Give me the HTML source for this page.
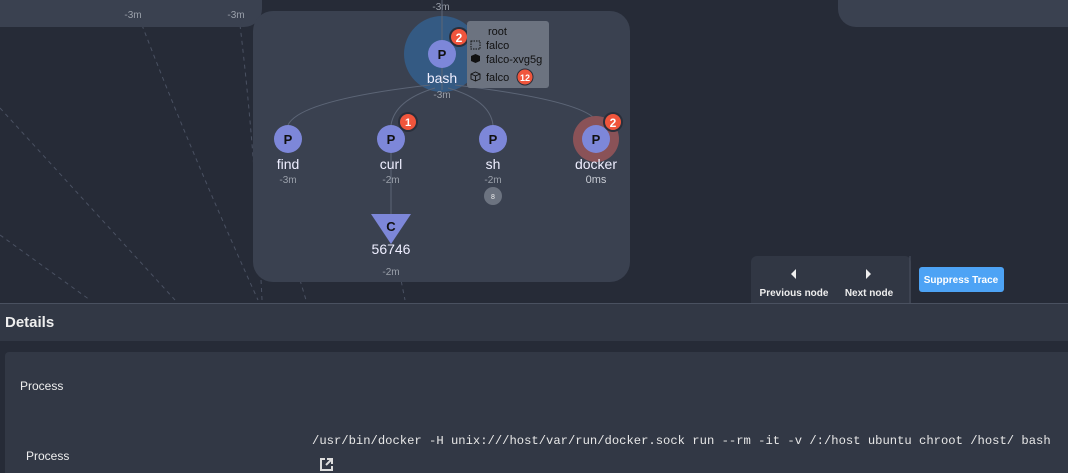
<!DOCTYPE html>
<html style="width:1068px;height:473px;overflow:hidden"><head><style>
body{margin:0;width:1068px;height:473px;overflow:hidden;background:#262b37;font-family:"Liberation Sans",sans-serif;position:relative}
.abs{position:absolute}
</style></head><body>
<svg class="abs" style="left:0;top:0" width="1068" height="303">
<g stroke="#4a5162" stroke-width="1" stroke-dasharray="4,4" fill="none">
<path d="M0 108 L175 300"/><path d="M0 235 L90 300"/><path d="M142 25 Q190 150 258 300"/><path d="M240 25 Q255 150 262 300"/>
<path d="M395 250 L405 300"/><path d="M300 280 L306 300"/>
</g>
<rect x="-20" y="-20" width="282" height="47" rx="18" fill="#3a4150"/>
<rect x="838" y="-20" width="250" height="47" rx="18" fill="#3a4150"/>
<rect x="253" y="11" width="377" height="271" rx="20" fill="#3a4150"/>
<text x="133" y="18" fill="#9aa0aa" font-size="10" text-anchor="middle">-3m</text>
<text x="236" y="18" fill="#9aa0aa" font-size="10" text-anchor="middle">-3m</text>
<text x="441" y="10" fill="#9aa0aa" font-size="10" text-anchor="middle">-3m</text>
<circle cx="442" cy="54" r="38" fill="#345a83"/>
<g stroke="#5c6576" fill="none" stroke-width="1">
<path d="M442 0 V90"/>
<path d="M430 85 Q300 100 288 125"/><path d="M435 88 Q395 100 391 125"/><path d="M448 88 Q490 100 493 125"/><path d="M455 85 Q580 100 596 120"/>
<path d="M391 153 V214"/>
</g>
<circle cx="442" cy="54" r="14" fill="#7d87d9"/>
<text x="442" y="59" font-size="13" font-weight="bold" text-anchor="middle" fill="#111">P</text>
<text x="442" y="83" font-size="14" text-anchor="middle" fill="#eef">bash</text>
<text x="442" y="98" font-size="10" text-anchor="middle" fill="#9aa0aa">-3m</text>
<circle cx="459" cy="37" r="10" fill="#2a2f3b"/><circle cx="459" cy="37" r="8" fill="#f0553c"/>
<text x="459" y="42" font-size="12" font-weight="bold" text-anchor="middle" fill="#fff">2</text>
<rect x="467" y="21" width="82" height="67" rx="3" fill="#6c7380"/>
<text x="488" y="35" font-size="11" fill="#111">root</text>
<rect x="471" y="41" width="9" height="8" fill="none" stroke="#111" stroke-dasharray="1.5,1"/>
<text x="486" y="49" font-size="11" fill="#111">falco</text>
<path d="M471 56 L475.5 54 L480 56 V61 L475.5 63 L471 61Z" fill="#111"/>
<text x="486" y="63" font-size="11" fill="#111">falco-xvg5g</text>
<path d="M471 74 L475.5 72 L480 74 V79 L475.5 81 L471 79Z M471 74 L475.5 76 L480 74 M475.5 76 V81" fill="none" stroke="#111" stroke-width="0.9"/>
<text x="486" y="81" font-size="11" fill="#111">falco</text>
<circle cx="525" cy="77" r="8" fill="#f0553c" stroke="#2a2f3b"/>
<text x="525" y="81" font-size="9" font-weight="bold" text-anchor="middle" fill="#fff">12</text>
<circle cx="596" cy="139" r="23" fill="#8a5257"/>
<g font-size="13" font-weight="bold" text-anchor="middle" fill="#111">
<circle cx="288" cy="139" r="14" fill="#7d87d9"/><text x="288" y="144">P</text>
<circle cx="391" cy="139" r="14" fill="#7d87d9"/><text x="391" y="144">P</text>
<circle cx="493" cy="139" r="14" fill="#7d87d9"/><text x="493" y="144">P</text>
<circle cx="596" cy="139" r="14" fill="#7d87d9"/><text x="596" y="144">P</text>
</g>
<g font-size="14" text-anchor="middle" fill="#eef">
<text x="288" y="169">find</text><text x="391" y="169">curl</text><text x="493" y="169">sh</text><text x="596" y="169">docker</text>
</g>
<g font-size="10" text-anchor="middle" fill="#9aa0aa">
<text x="288" y="183">-3m</text><text x="391" y="183">-2m</text><text x="493" y="183">-2m</text><text x="596" y="183" font-size="11" fill="#c8ccd4">0ms</text>
</g>
<circle cx="408" cy="122" r="10" fill="#2a2f3b"/><circle cx="408" cy="122" r="8" fill="#f0553c"/>
<text x="408" y="126" font-size="11" font-weight="bold" text-anchor="middle" fill="#fff">1</text>
<circle cx="613" cy="122" r="10" fill="#2a2f3b"/><circle cx="613" cy="122" r="8" fill="#f0553c"/>
<text x="613" y="127" font-size="12" font-weight="bold" text-anchor="middle" fill="#fff">2</text>
<circle cx="493" cy="196" r="9" fill="#6c7380"/>
<text x="493" y="199" font-size="7" text-anchor="middle" fill="#eee">8</text>
<path d="M371 214 H411 L391 244Z" fill="#7d87d9"/>
<text x="391" y="231" font-size="13" font-weight="bold" text-anchor="middle" fill="#111">C</text>
<text x="391" y="254" font-size="14" text-anchor="middle" fill="#eef">56746</text>
<text x="391" y="275" font-size="10" text-anchor="middle" fill="#9aa0aa">-2m</text>
<rect x="751" y="256" width="160" height="60" rx="6" fill="#313744"/>
<line x1="910" y1="256" x2="910" y2="303" stroke="#4a5160"/>
<path d="M796 269 V279 L791 274Z" fill="#eee"/><path d="M866 269 V279 L871 274Z" fill="#eee"/>
<text x="794" y="296" font-size="10" font-weight="bold" text-anchor="middle" fill="#eee">Previous node</text>
<text x="869" y="296" font-size="10" font-weight="bold" text-anchor="middle" fill="#eee">Next node</text>
<rect x="919" y="267" width="85" height="25" rx="3" fill="#4da3f5"/>
<text x="961" y="283" font-size="10" font-weight="bold" text-anchor="middle" fill="#fff">Suppress Trace</text>
</svg>
<div class="abs" style="left:0;top:303px;width:1068px;height:1px;background:#4a5160"></div>
<div class="abs" style="left:0;top:304px;width:1068px;height:37px;background:#323845"></div>
<div class="abs" style="left:5px;top:314px;color:#eee;font-size:15px;font-weight:bold">Details</div>
<div class="abs" style="left:5px;top:352px;width:1063px;height:121px;background:#323845;border-radius:4px 0 0 0"></div>
<div class="abs" style="left:20px;top:379px;color:#eee;font-size:12px">Process</div>
<div class="abs" style="left:26px;top:449px;color:#eee;font-size:12px">Process</div>
<div class="abs" style="left:312px;top:434px;color:#e8e8e8;font-size:12.2px;font-family:'Liberation Mono',monospace;white-space:nowrap">/usr/bin/docker -H unix:///host/var/run/docker.sock run --rm -it -v /:/host ubuntu chroot /host/ bash</div>
<svg class="abs" style="left:319px;top:457px" width="15" height="15"><path d="M6 2 H2 V13 H13 V9" fill="none" stroke="#ddd" stroke-width="2"/><path d="M8 2 H13 V7 M13 2 L7 8" fill="none" stroke="#ddd" stroke-width="2"/></svg>
</body></html>
